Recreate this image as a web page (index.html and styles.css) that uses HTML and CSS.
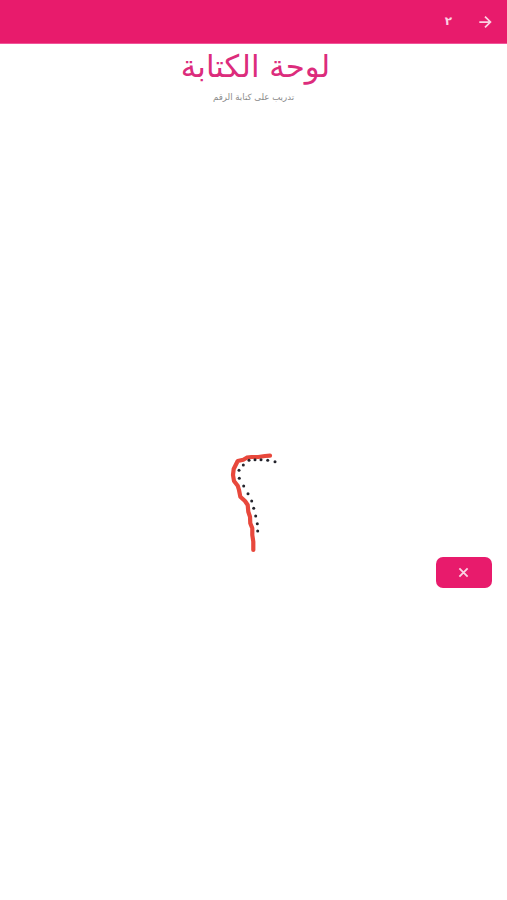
FILE: index.html
```html
<!DOCTYPE html>
<html lang="ar" dir="rtl">
<head>
<meta charset="utf-8">
<title>لوحة الكتابة</title>
<link rel="stylesheet" href="styles.css">
</head>
<body>
<div class="page">
  <header class="topbar">
    <svg class="back" viewBox="0 0 16 16" aria-hidden="true"><path d="M1.5 8H14M8 1.8 14.2 8 8 14.2"/></svg>
    <span class="digit">٢</span>
  </header>
  <section class="intro">
    <h1 class="title">لوحة الكتابة</h1>
    <p class="subtitle">تدريب على كتابة الرقم</p>
  </section>
  <main class="board">
    <svg class="sketch" viewBox="0 0 507 790" aria-hidden="true">
      <polyline class="stroke" points="270,345.700 265,346 258.300,347 251.700,347 246.700,347.700 243.300,349.700 237.700,351 235.700,355 233.700,359 233,365 234,371 237.700,375.700 239,380 240.300,386.700 245,391 247.700,395 248.300,401.700 250,406.700 250.300,413.300 252.300,418.300 252.300,425 253.300,431.700 253.300,440"/>
      <g class="dots">
        <circle cx="275" cy="351.700" r="1.500"/><circle cx="267.700" cy="350.300" r="1.500"/><circle cx="261" cy="349.700" r="1.500"/>
        <circle cx="255" cy="349.700" r="1.500"/><circle cx="249" cy="350.300" r="1.500"/><circle cx="243.300" cy="355" r="1.500"/>
        <circle cx="239" cy="360.300" r="1.500"/><circle cx="239.300" cy="368.300" r="1.500"/><circle cx="243.700" cy="376" r="1.500"/>
        <circle cx="248" cy="383.700" r="1.500"/><circle cx="251.700" cy="391" r="1.500"/><circle cx="253.700" cy="398.300" r="1.500"/>
        <circle cx="255.700" cy="406" r="1.500"/><circle cx="257.300" cy="413.700" r="1.500"/><circle cx="257.700" cy="421" r="1.500"/>
      </g>
    </svg>
    <button class="clear" type="button" aria-label="مسح">
      <svg viewBox="0 0 12 12" aria-hidden="true"><path d="M1.500 1.500 10.500 10.500M10.500 1.500 1.500 10.500"/></svg>
    </button>
  </main>
</div>
</body>
</html>
```

FILE: styles.css
```css
* { box-sizing: border-box; }

html, body {
  margin: 0;
  height: 100%;
  background: #fff;
}

.page {
  display: flex;
  flex-direction: column;
  height: 900px;
  font-family: "DejaVu Sans", "Noto Sans", sans-serif;
  overflow: hidden;
}

.topbar {
  display: flex;
  align-items: center;
  gap: 26px;
  height: 44px;
  flex: none;
  padding: 0 15px 1px;
  background: #e81b6c;
  border-bottom: 1px solid #f0559a;
}

.back {
  width: 14px;
  height: 14px;
  margin-top: 2px;
  fill: none;
  stroke: #fbd3e3;
  stroke-width: 2;
}

.digit {
  color: #fbd3e3;
  font-size: 12px;
  font-weight: 700;
  line-height: 1;
}

.intro {
  flex: none;
  height: 66px;
  text-align: center;
}

.title {
  margin: 1px 0 0;
  padding-left: 4px;
  color: #dc2c7c;
  font-size: 30.800px;
  font-weight: 400;
  line-height: 42px;
}

.subtitle {
  margin: 3px 0 0;
  color: #8a8a8a;
  font-size: 8.600px;
  line-height: 14px;
}

.board {
  position: relative;
  flex: 1;
}

.sketch {
  display: block;
  width: 100%;
  height: 100%;
}

.stroke {
  fill: none;
  stroke: #e8483c;
  stroke-width: 4.200;
  stroke-linecap: round;
  stroke-linejoin: round;
}

.dots {
  fill: #23232b;
}

.clear {
  position: absolute;
  left: 436px;
  top: 446.500px;
  display: flex;
  align-items: center;
  justify-content: center;
  width: 56px;
  height: 31px;
  padding: 0 1px 0 0;
  border: 0;
  border-radius: 7px;
  background: #e81b6c;
}

.clear svg {
  width: 11px;
  height: 11px;
  fill: none;
  stroke: #fbd3e3;
  stroke-width: 2;
}
```
